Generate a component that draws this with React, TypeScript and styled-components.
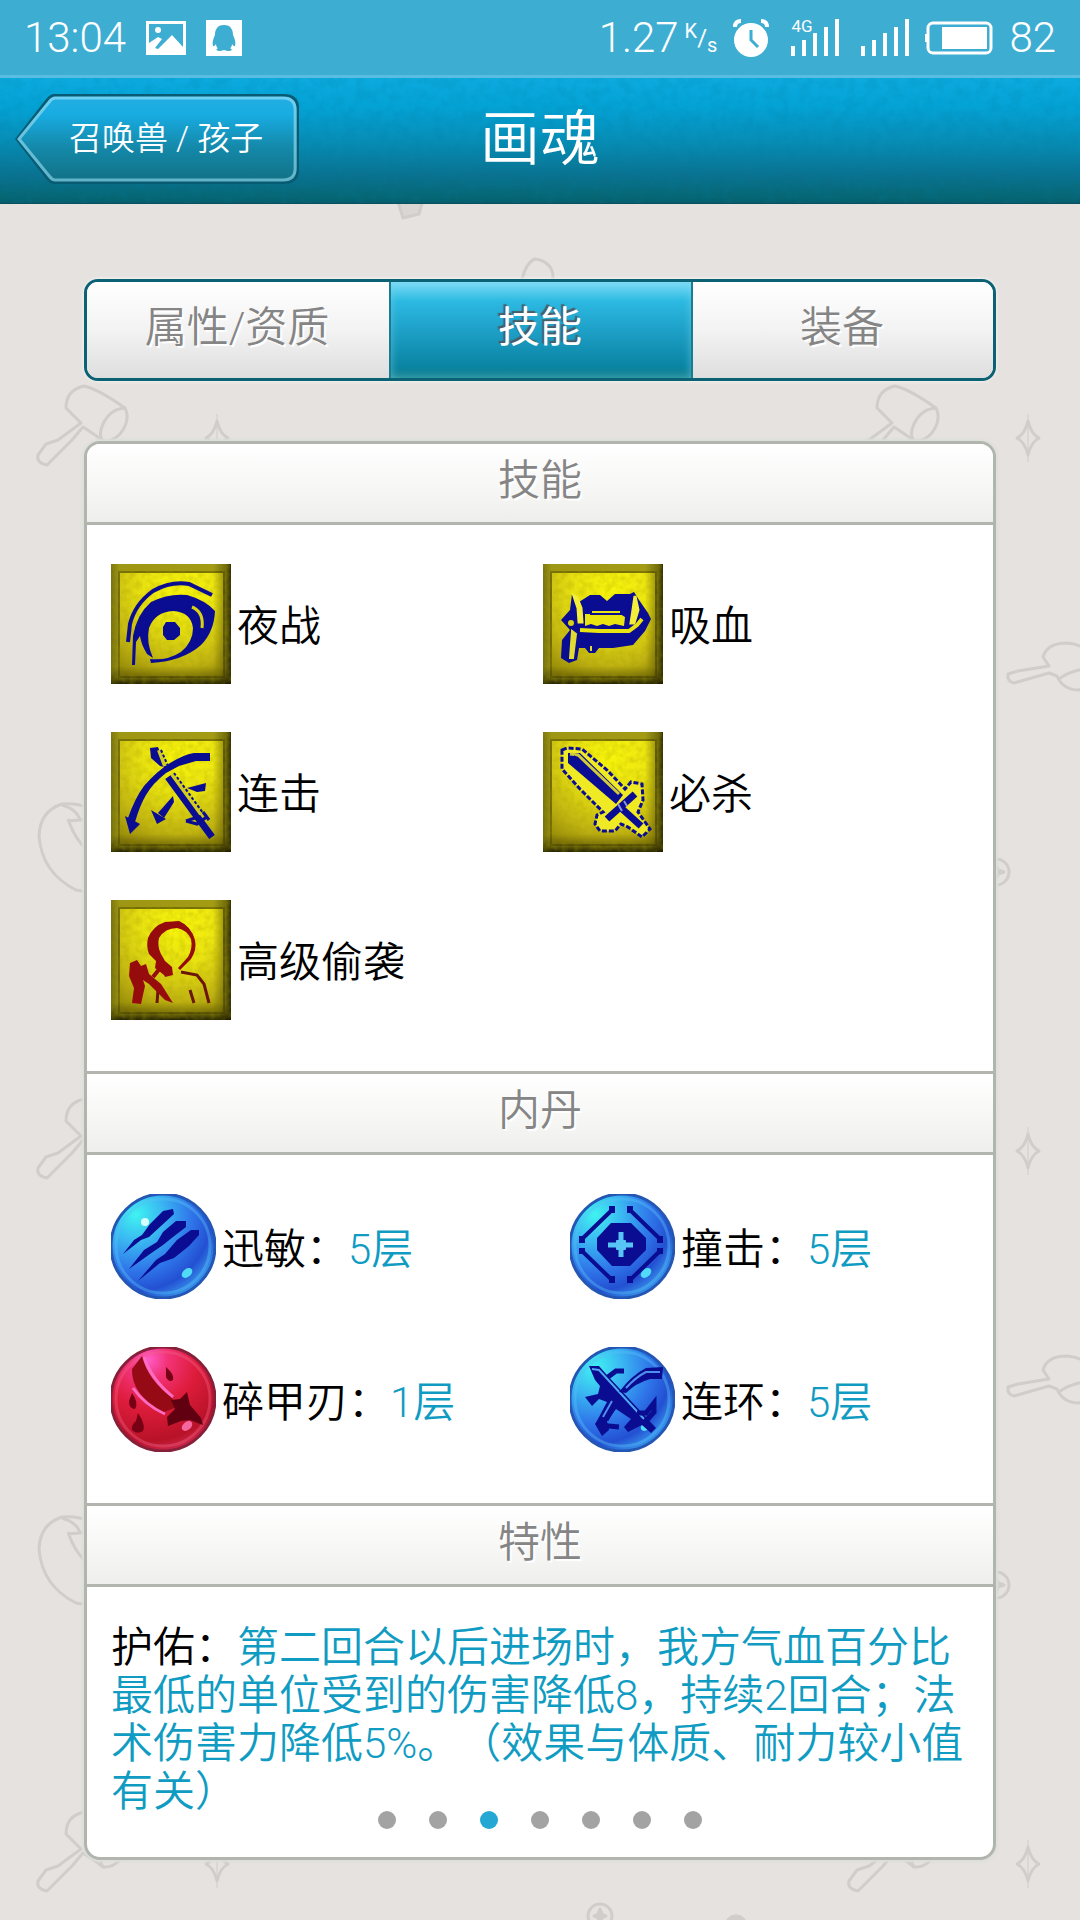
import React, { useState } from "react";
import styled, { createGlobalStyle, css } from "styled-components";

const INK = "#0a0c92";
const LINE = "#b1b5ae";

const GlobalStyle = createGlobalStyle`
  *, *::before, *::after { box-sizing: border-box; }
  body {
    margin: 0;
    background: #e5e2df;
    font-family: Roboto, "Noto Sans CJK SC", sans-serif;
    font-weight: 350;
    text-spacing-trim: space-all;
  }
  button { font: inherit; cursor: pointer; }
  h1, h2, p, ul { margin: 0; padding: 0; font-weight: inherit; }
  ul { list-style: none; }
`;

const Page = styled.div`
  position: relative;
  min-height: 100vh;
`;

const Backdrop = styled.svg`
  position: absolute;
  inset: 0;
  width: 100%;
  height: 100%;
`;

const StatusBar = styled.div`
  position: relative;
  display: flex;
  align-items: center;
  justify-content: space-between;
  height: 78px;
  padding: 0 24px;
  border-bottom: 3px solid #58bde0;
  background: #3eadd2;
  color: #fff;
  font-size: 42px;
  font-weight: 300;
  line-height: 75px;
`;

const StatusGroup = styled.div`
  display: flex;
  align-items: center;
  gap: ${(p: { $gap: number }) => p.$gap}px;
`;

const Speed = styled.span`
  display: flex;
  align-items: center;
  gap: 6px;
`;

const Unit = styled.span`
  display: flex;
  height: 34px;
  font-size: 20px;
  font-weight: 400;
  line-height: 20px;
`;

const UnitPart = styled.span<{ $low?: boolean; $big?: boolean }>`
  align-self: ${(p) => (p.$big ? "center" : p.$low ? "flex-end" : "flex-start")};
  font-size: ${(p) => (p.$big ? 24 : 20)}px;
`;

const TopBar = styled.header`
  position: relative;
  display: grid;
  grid-template-columns: 1fr auto 1fr;
  align-items: center;
  height: 126px;
  padding: 0 15px;
  border-bottom: 1px solid #0a4f60;
  background: linear-gradient(#0caade 0%, #04a3d6 22%, #078cb4 52%, #0a7290 78%, #066672 96%, #055c6c 100%);
`;

const Grain = styled.svg`
  position: absolute;
  inset: 0;
  width: 100%;
  height: 100%;
  opacity: 0.14;
`;

const BackButton = styled.button`
  position: relative;
  justify-self: start;
  height: 90px;
  margin-bottom: 3px;
  padding: 0 36px 0 54px;
  border: 0;
  background: none;
  color: #fff;
  font-size: 33px;
  line-height: 40px;
`;

const BackShape = styled.svg`
  position: absolute;
  inset: 0;
  width: 100%;
  height: 100%;
`;

const BackLabel = styled.span`
  position: relative;
`;

const Title = styled.h1`
  position: relative;
  padding-bottom: 2px;
  color: #fff;
  font-size: 60px;
  line-height: 70px;
`;

const Main = styled.main`
  position: relative;
  padding: 75px 84px 60px;
`;

const Tabs = styled.div`
  display: grid;
  grid-template-columns: repeat(3, 1fr);
  overflow: hidden;
  border: 3px solid #0a6274;
  border-radius: 14px;
  box-shadow: 0 0 3px 1px #f2f1ef;
`;

const Tab = styled.button<{ $active: boolean }>`
  height: 96px;
  padding: 0 2px 4px 0;
  border: 0;
  background: linear-gradient(#ffffff 0%, #f3f3f3 50%, #dedede 100%);
  color: #858585;
  font-size: 42px;
  line-height: 50px;
  text-shadow: 2px 2px 1px #fff;

  & + & {
    border-left: 2px solid #1b7c90;
  }

  ${(p) =>
    p.$active &&
    css`
      background: linear-gradient(#7fdcf8 0%, #5cceee 8%, #2cb9e2 20%, #1d9fc6 52%, #0a84a3 88%, #15808c 100%);
      box-shadow: inset 0 0 8px rgba(120, 215, 235, 0.6);
      color: #fff;
      font-weight: 400;
      text-shadow: -2px -2px 1px #4a5c66;
    `}
`;

const Panel = styled.section`
  position: relative;
  margin-top: 60px;
  overflow: hidden;
  border: 3px solid ${LINE};
  border-radius: 16px;
  background: #fff;
  box-shadow: 0 0 2px 2px #dcdfda;
`;

const SectionTitle = styled.h2<{ $first?: boolean }>`
  height: ${(p) => (p.$first ? 81 : 84)}px;
  padding-top: 12px;
  border-top: ${(p) => (p.$first ? 0 : 3)}px solid ${LINE};
  border-bottom: 3px solid ${LINE};
  background: linear-gradient(#ffffff, #f6f6f5 60%, #eeefec);
  color: #858585;
  font-size: 42px;
  line-height: 50px;
  text-align: center;
  text-shadow: 2px 2px 1px #fff;
`;

const SkillList = styled.ul`
  display: grid;
  grid-template-columns: 1fr 1fr;
  row-gap: 48px;
  padding: 39px 18px 51px 24px;
`;

const PearlList = styled.ul`
  display: grid;
  grid-template-columns: 17fr 15fr;
  row-gap: 48px;
  padding: 39px 18px 51px 24px;
`;

const Entry = styled.li`
  display: flex;
  align-items: center;
  gap: 6px;
  color: #000;
  font-size: 42px;
  line-height: 50px;
`;

const EntryText = styled.span`
  padding-top: 6px;
`;

const Blue = styled.span`
  color: #109cc2;
`;

const Trait = styled.p`
  padding: 37px 18px 41px 24px;
  color: #109cc2;
  font-size: 42px;
  line-height: 48px;
`;

const TraitName = styled.span`
  color: #000;
`;

const Dots = styled.div`
  position: absolute;
  right: 0;
  bottom: 28px;
  left: 0;
  display: flex;
  justify-content: center;
  gap: 33px;
`;

const Dot = styled.button<{ $active: boolean }>`
  width: 18px;
  height: 18px;
  padding: 0;
  border: 0;
  border-radius: 50%;
  background: ${(p) => (p.$active ? "#23a7d3" : "#a3a3a3")};
`;

/* ---------- backdrop doodles ---------- */

const Doodles = () => (
  <Backdrop aria-hidden="true">
    <defs>
      <pattern id="doodles" width="811" height="713" patternUnits="userSpaceOnUse">
        <g fill="none" stroke="#d0cdca" strokeWidth="3" strokeLinejoin="round">
          <path d="M81 423 L66 408 Q66 390 84 386 Q98 389 125 408 Q131 420 120 434 Q112 442 103 441 Q97 436 83 427 L72 440 L47 465 Q36 463 38 455 L46 444 L58 440 Z" />
          <path d="M125 408 Q110 409 103 424 Q98 435 103 441" />
          <path d="M217 421 Q220 434 228 438 Q220 442 217 455 Q214 442 206 438 Q214 434 217 421Z" />
          <path d="M217 414V462" strokeWidth="1" />
          <path d="M92 96 Q78 90 62 91 Q40 98 39 123 Q42 160 76 177 Q90 180 110 176" />
          <path d="M68 108 L90 106 M68 106 Q76 130 92 140 M80 106 Q76 96 62 92" />
          <path d="M238 666 L232 657 Q236 643 256 643 Q272 644 278 654 L288 668 Q288 684 268 690 Q252 690 246 676 L238 673 L203 683 Q196 682 197 674 L207 671 Z" />
          <path d="M288 668 Q262 668 248 679" />
          <circle cx="185" cy="159" r="13" />
          <path d="M185 151 L187 157 L193 159 L187 161 L185 167 L183 161 L177 159 L183 157 Z" fill="#d0cdca" />
          <circle cx="600" cy="490" r="12" />
          <path d="M600 483 L602 488 L606 490 L602 492 L600 497 L598 492 L594 490 L598 488 Z" fill="#d0cdca" />
          <circle cx="736" cy="500" r="10" fill="#d0cdca" />
          <path d="M395 192 L403 218 L419 214 L425 192" fill="#d9d6d3" />
          <path d="M521 284 Q525 263 535 259 Q550 261 553 274 L552 286" />
        </g>
      </pattern>
    </defs>
    <rect width="100%" height="100%" fill="url(#doodles)" />
  </Backdrop>
);

/* ---------- status bar icons ---------- */

const PictureIcon = () => (
  <svg width="40" height="34" viewBox="0 0 40 34" aria-hidden="true">
    <path fill="#fff" fillRule="evenodd" d="M0 0H40V34H0Z M3 3V22L12 16L16 18L9 27L12 28L26 14L37 26V3Z" />
    <circle cx="12" cy="9" r="3" fill="#fff" />
  </svg>
);

const PenguinIcon = () => (
  <svg width="36" height="36" viewBox="0 0 36 36" aria-hidden="true">
    <path fill="#fff" d="M0 0H36V36H0Z" />
    <path
      fill="#3eadd2"
      d="M18 5C11 5 9 10 9 15C7 19 6 23 7 26C8 27 9 25 10 24C10 26 11 28 12 28C9 30 11 31 14 31C16 31 17 30 18 30C19 30 20 31 22 31C26 31 27 30 24 28C25 28 26 26 26 24C27 25 28 27 29 26C30 23 29 19 27 15C27 10 25 5 18 5Z"
    />
  </svg>
);

const AlarmIcon = () => (
  <svg width="36" height="38" viewBox="0 0 36 38" aria-hidden="true">
    <circle cx="18" cy="21" r="17" fill="#fff" />
    <path d="M2 8Q2 2 8 2 M28 2Q34 2 34 8" fill="none" stroke="#fff" strokeWidth="4" />
    <path d="M18 11V21L25 28" fill="none" stroke="#3eadd2" strokeWidth="3" />
  </svg>
);

const SignalBox = styled.span`
  position: relative;
  display: flex;
  align-items: flex-end;
  gap: 7px;
  height: 37px;
  margin-left: 6px;
`;

const SignalBar = styled.i<{ $height: number }>`
  width: 4px;
  height: ${(p) => p.$height}px;
  background: #fff;
`;

const NetworkTag = styled.span`
  position: absolute;
  top: 0;
  left: 0;
  font-size: 17px;
  font-weight: 400;
  line-height: 14px;
`;

const Signal = ({ tag }: { tag?: string }) => (
  <SignalBox>
    {[10, 16, 23, 29, 37].map((h) => (
      <SignalBar key={h} $height={h} />
    ))}
    {tag && <NetworkTag>{tag}</NetworkTag>}
  </SignalBox>
);

const BatteryIcon = () => (
  <svg width="68" height="34" viewBox="0 0 68 34" aria-hidden="true">
    <rect x="3" y="2" width="63" height="30" rx="5" fill="none" stroke="#fff" strokeWidth="3" />
    <path d="M0 13H3V21H0Z M17 6H62V28H17Z" fill="#fff" />
  </svg>
);

/* ---------- skill plates ---------- */

const Plate = ({ children }: { children: React.ReactNode }) => (
  <svg width="120" height="120" viewBox="0 0 120 120" aria-hidden="true">
    <rect width="120" height="120" fill="#a49c16" />
    <rect x="8" y="8" width="105" height="105" fill="url(#plateFace)" stroke="#7a7208" strokeWidth="2" />
    <rect width="120" height="120" fill="url(#plateShadeX)" />
    <rect width="120" height="120" fill="url(#plateShadeY)" />
    <rect width="120" height="120" filter="url(#plateGrain)" opacity="0.28" />
    {children}
  </svg>
);

const HiddenSvg = styled.svg`
  position: absolute;
`;

const SharedDefs = () => (
  <HiddenSvg width="0" height="0" aria-hidden="true">
    <defs>
      <linearGradient id="plateShadeX" x1="0" y1="0" x2="1" y2="0">
        <stop offset="0" stopColor="#2a2600" stopOpacity="0.35" />
        <stop offset="0.07" stopColor="#2a2600" stopOpacity="0.05" />
        <stop offset="0.85" stopColor="#2a2600" stopOpacity="0" />
        <stop offset="0.95" stopColor="#2a2600" stopOpacity="0.4" />
        <stop offset="1" stopColor="#151300" stopOpacity="0.85" />
      </linearGradient>
      <linearGradient id="plateShadeY" x1="0" y1="0" x2="0" y2="1">
        <stop offset="0" stopColor="#2a2600" stopOpacity="0" />
        <stop offset="0.85" stopColor="#2a2600" stopOpacity="0.06" />
        <stop offset="0.94" stopColor="#2a2600" stopOpacity="0.4" />
        <stop offset="1" stopColor="#151300" stopOpacity="0.9" />
      </linearGradient>
      <radialGradient id="plateFace" cx="0.55" cy="0.2" r="0.9">
        <stop offset="0" stopColor="#fffc0a" />
        <stop offset="0.4" stopColor="#f1ea12" />
        <stop offset="0.75" stopColor="#cfc114" />
        <stop offset="1" stopColor="#a3960c" />
      </radialGradient>
      <filter id="plateGrain">
        <feTurbulence type="fractalNoise" baseFrequency="0.16" numOctaves="2" seed="4" />
        <feColorMatrix values="0 0 0 0 0.35  0 0 0 0 0.32  0 0 0 0 0  2 0 0 0 -0.7" />
      </filter>
      <radialGradient id="pearlBlue" cx="0.24" cy="0.2" r="0.86">
        <stop offset="0" stopColor="#3ff3f0" />
        <stop offset="0.3" stopColor="#3ab8f2" />
        <stop offset="0.62" stopColor="#2f76ea" />
        <stop offset="0.85" stopColor="#2350d2" />
        <stop offset="1" stopColor="#348ae8" />
      </radialGradient>
      <radialGradient id="pearlRed" cx="0.36" cy="0.12" r="0.92">
        <stop offset="0" stopColor="#ff5cc8" />
        <stop offset="0.2" stopColor="#f23478" />
        <stop offset="0.5" stopColor="#de1c3c" />
        <stop offset="0.85" stopColor="#b81228" />
        <stop offset="1" stopColor="#cf2a4c" />
      </radialGradient>
    </defs>
  </HiddenSvg>
);

const EyeIcon = () => (
  <Plate>
    <path d="M17 78L19 60Q24 40 42 27Q60 17 78 20L101 31" fill="none" stroke={INK} strokeWidth="4" />
    <path
      fillRule="evenodd"
      fill={INK}
      d="M21 101L22 72Q26 50 40 38Q58 29 76 31Q94 36 104 47Q103 68 90 81Q72 97 40 99L39 95Q56 97 70 88Q82 78 82 64Q80 48 62 47Q44 48 38 64Q35 78 42 94L36 90Q30 80 29 72L25 78L24 101Z"
    />
    <path d="M81 43Q93 48 91 64" fill="none" stroke="#d8d214" strokeWidth="3" />
    <path d="M55 58H64L69 64V71L63 76H56L52 71V63Z" fill={INK} />
  </Plate>
);

const FangIcon = () => (
  <Plate>
    <path
      fill={INK}
      d="M29 30L36 38L47 31L57 31L64 37L72 30H87L91 28L96 36L105 49L108 55L102 67L90 81L70 84H56L52 89H46L42 84H36L34 96L26 99L18 94L19 76L27 66L18 56L27 46Z"
    />
    <path d="M42 50L49 50V47H77V50L82 53L81 62L72 60L66 62L60 60L54 62L48 60L42 62Z" fill="#e9e312" />
    <path d="M47 50H79" stroke={INK} strokeWidth="2" />
    <path d="M37 66L56 67H86L94 61L99 55" fill="none" stroke="#e9e312" strokeWidth="4" />
    <path d="M31 32L35 44L36 58L39 58L38 44L34 34Z M92 32L90 46L88 59L91 59L95 46Z" fill="#f4ee3a" stroke="#f4ee3a" strokeWidth="3" />
    <path d="M29 67L27 94H30L33 70Z M48 82V87" fill="#e3dc30" stroke="#e3dc30" strokeWidth="2" />
    <circle cx="28" cy="59" r="3" fill="#d9d214" />
  </Plate>
);

const DoubleHitIcon = () => (
  <Plate>
    <path d="M99 21V29H85L68 34L55 41Q42 51 35 63Q29 73 24 90L17 86Q24 66 33 54Q46 39 59 31Q74 22 83 21Z" fill={INK} />
    <path d="M14 84L29 92L19 102Z M40 78L55 87L46 92Z M39 16L47 15L52 28L57 36L49 34L40 26Z" fill={INK} />
    <path d="M57 45L101 105" stroke={INK} strokeWidth="7" />
    <path d="M48 18L54 34 M61 42L90 82" stroke="#d3cc20" strokeWidth="4" />
    <path d="M50 18L57 34 M63 41L92 81" stroke={INK} strokeWidth="2" strokeDasharray="3 2" />
    <path d="M75 89L86 92L97 84M75 89L84 86M92 80L98 88" fill="none" stroke={INK} strokeWidth="3" />
    <path d="M76 56L95 51L94 59L86 60Z M62 64L47 81L53 86L63 70Z" fill={INK} />
  </Plate>
);

const SwordIcon = () => (
  <Plate>
    <path
      d="M19 18L24 16L39 17L64 38L82 57L88 50L99 52L100 68L95 80L107 97L99 105L85 95L78 92L72 99H57L52 92L54 83L60 80L37 57L19 37Z"
      fill="#f0ea25"
      stroke={INK}
      strokeWidth="3"
      strokeDasharray="5 2"
    />
    <path d="M25 21H37L80 63L73 72L25 31Z" fill={INK} />
    <path d="M27 22L35 23L76 62" fill="none" stroke="#cfca3a" strokeWidth="3" />
    <path d="M31 24L76 66" stroke={INK} strokeWidth="2" strokeDasharray="2 2" />
    <path d="M64 87L92 62" stroke={INK} strokeWidth="7" />
    <path d="M77 75L98 94" stroke={INK} strokeWidth="7" />
    <path d="M75 72L79 79M81 69L84 74" stroke="#8b93d4" strokeWidth="2" />
  </Plate>
);

const SneakIcon = () => (
  <Plate>
    <path
      fill="#960c0c"
      d="M53 75L44 68L45 61L38 54Q35 46 37 38Q42 26 54 22L68 21Q80 26 84 40Q86 50 80 59L69 70L67 68L77 57Q82 48 80 39Q76 30 66 28Q54 28 48 38Q46 46 50 54L54 61L61 67L62 75L54 77Z"
    />
    <path d="M70 72L86 75L93 84L98 103 M79 90L83 103 M47 90L46 103" fill="none" stroke="#6b1608" strokeWidth="3" />
    <path d="M19 63L26 60L30 66L35 64L38 74L50 84L62 103L54 100L38 84L32 80L34 86L30 104L21 103L23 88L18 76Z" fill="#960c0c" />
    <path d="M42 77L50 67L58 72" fill="none" stroke="#960c0c" strokeWidth="4" />
  </Plate>
);

/* ---------- pearls ---------- */

const Pearl = ({ tone, children }: { tone: "blue" | "red"; children: React.ReactNode }) => (
  <svg width="105" height="105" viewBox="0 0 105 105" aria-hidden="true">
    <circle
      cx="52"
      cy="52"
      r="52"
      fill={tone === "blue" ? "url(#pearlBlue)" : "url(#pearlRed)"}
      stroke={tone === "blue" ? "#2456b4" : "#86203a"}
      strokeWidth="3"
    />
    <circle cx="52" cy="52" r="47" fill="none" stroke={tone === "blue" ? "#58c4f4" : "#f06088"} strokeWidth="3" opacity="0.4" />
    <ellipse cx="76" cy="79" rx="6" ry="4" fill={tone === "blue" ? "#50dcf8" : "#f468a0"} transform="rotate(-40 76 79)" />
    {children}
  </svg>
);

const ClawPearl = () => (
  <Pearl tone="blue">
    <ellipse cx="34" cy="28" rx="4" ry="4" fill="#d8ffff" />
    <g fill={INK}>
      <path d="M12 60L23 46L31 41L39 30L52 17L62 15L63 20L50 32L38 43L30 46Z" />
      <path d="M18 75L33 56L46 48L52 38L65 27L75 27V33L62 43L52 51L39 60Z" />
      <path d="M27 87L45 66L54 60L66 46L80 36L88 36V41L78 52L63 64L49 69Z" />
    </g>
  </Pearl>
);

const BladePearl = () => (
  <Pearl tone="red">
    <path d="M33 10Q40 32 62 50M22 41Q34 58 54 67" fill="none" stroke="#ff6cc4" strokeWidth="3" />
    <path d="M31 9Q37 33 61 51L66 60L53 65Q20 48 21 22Z" fill="#960a16" />
    <path d="M76 45L79 58L90 71L92 78L79 73L70 74L57 79L56 70L64 62L60 53L69 52Z" fill="#600010" />
    <path d="M55 20Q64 28 62 33Q58 36 55 30Z M21 46Q28 56 24 62Q18 62 18 54Z M27 66Q35 78 32 84Q26 88 21 83Q20 78 25 74Z" fill="#780014" />
  </Pearl>
);

const RamPearl = () => (
  <Pearl tone="blue">
    <path d="M41 29H61L76 44V56L60 72H42L27 56V44Z" fill={INK} />
    <path d="M51 38V63M38 51H63" stroke="#58c4f6" strokeWidth="5" />
    <path d="M46 51H56M51 46V56" stroke="#58c4f6" strokeWidth="9" />
    <path d="M42 16L12 45M60 16L90 45M12 57L42 86M90 57L60 86" stroke={INK} strokeWidth="4" />
    <path
      d="M39 12H45V19H39Z M57 12H63V19H57Z M9 42H15V49H9Z M87 42H93V49H87Z M9 54H15V60H9Z M87 54H93V60H87Z M39 82H45V89H39Z M57 82H63V89H57Z"
      fill={INK}
    />
  </Pearl>
);

const ChainPearl = () => (
  <Pearl tone="blue">
    <path d="M19 19H29L36 27L86 81L81 86L72 78L58 85L54 80L61 72L46 62L37 74L39 83L32 89L25 77L28 72L37 55L29 52L22 59L15 50L28 47L30 39L25 33Z" fill={INK} />
    <path d="M22 22L29 23L74 72" fill="none" stroke="#4fa8f0" strokeWidth="2" />
    <path d="M93 20L76 21Q62 28 49 45L56 46Q66 36 80 32H92Z" fill={INK} />
    <path d="M90 25H76Q66 30 56 41" fill="none" stroke="#4f90ec" strokeWidth="2" />
    <path d="M38 30L46 24H54M67 66L76 66L84 56L84 65L76 74 M46 56L36 73M28 78L49 80" fill="none" stroke={INK} strokeWidth="5" />
    <path d="M42 54L33 70" stroke="#4f90ec" strokeWidth="2" />
  </Pearl>
);

const tabs = ["属性/资质", "技能", "装备"];

const skills = [
  { name: "夜战", Icon: EyeIcon },
  { name: "吸血", Icon: FangIcon },
  { name: "连击", Icon: DoubleHitIcon },
  { name: "必杀", Icon: SwordIcon },
  { name: "高级偷袭", Icon: SneakIcon },
];

const pearls = [
  { name: "迅敏", level: 5, Icon: ClawPearl },
  { name: "撞击", level: 5, Icon: RamPearl },
  { name: "碎甲刃", level: 1, Icon: BladePearl },
  { name: "连环", level: 5, Icon: ChainPearl },
];

export default function App() {
  const [tab, setTab] = useState(1);
  const [page, setPage] = useState(2);

  return (
    <Page>
      <GlobalStyle />
      <SharedDefs />
      <Doodles />
      <StatusBar>
        <StatusGroup $gap={20}>
          <span>13:04</span>
          <PictureIcon />
          <PenguinIcon />
        </StatusGroup>
        <StatusGroup $gap={16}>
          <Speed>
            1.27
            <Unit>
              <UnitPart>K</UnitPart>
              <UnitPart $big>/</UnitPart>
              <UnitPart $low>s</UnitPart>
            </Unit>
          </Speed>
          <AlarmIcon />
          <Signal tag="4G" />
          <Signal />
          <BatteryIcon />
          <span>82</span>
        </StatusGroup>
      </StatusBar>
      <TopBar>
        <Grain aria-hidden="true">
          <filter id="barGrain">
            <feTurbulence type="fractalNoise" baseFrequency="0.09" numOctaves="3" seed="8" />
            <feColorMatrix values="0 0 0 0 0  0 0 0 0 0.2  0 0 0 0 0.35  3 0 0 0 -1.2" />
          </filter>
          <rect width="100%" height="100%" filter="url(#barGrain)" />
        </Grain>
        <BackButton type="button">
          <BackShape viewBox="0 0 283 90" preserveAspectRatio="none" aria-hidden="true">
            <defs>
              <linearGradient id="backFill" x1="0" y1="0" x2="0" y2="1">
                <stop offset="0" stopColor="#22aee2" />
                <stop offset="0.2" stopColor="#18ace2" />
                <stop offset="0.6" stopColor="#1489aa" />
                <stop offset="1" stopColor="#127286" />
              </linearGradient>
              <linearGradient id="backRim" x1="0" y1="0" x2="0" y2="1">
                <stop offset="0" stopColor="#6ed0f2" />
                <stop offset="1" stopColor="#62b4c8" />
              </linearGradient>
            </defs>
            <path d="M39 0H268Q283 0 283 15V75Q283 90 268 90H39Q35 90 31 85L0 45L31 5Q35 0 39 0Z" fill="#075c74" />
            <path d="M40 4H267Q279 4 279 16V74Q279 86 267 86H40Q37 86 34 82L4 45L34 8Q37 4 40 4Z" fill="url(#backFill)" stroke="url(#backRim)" strokeWidth="3" />
          </BackShape>
          <BackLabel>召唤兽 / 孩子</BackLabel>
        </BackButton>
        <Title>画魂</Title>
      </TopBar>
      <Main>
        <Tabs role="tablist">
          {tabs.map((name, i) => (
            <Tab key={name} type="button" role="tab" aria-selected={i === tab} $active={i === tab} onClick={() => setTab(i)}>
              {name}
            </Tab>
          ))}
        </Tabs>
        <Panel>
          <SectionTitle $first>技能</SectionTitle>
          <SkillList>
            {skills.map(({ name, Icon }) => (
              <Entry key={name}>
                <Icon />
                <EntryText>{name}</EntryText>
              </Entry>
            ))}
          </SkillList>
          <SectionTitle>内丹</SectionTitle>
          <PearlList>
            {pearls.map(({ name, level, Icon }) => (
              <Entry key={name}>
                <Icon />
                <EntryText>
                  {name}：<Blue>{level}层</Blue>
                </EntryText>
              </Entry>
            ))}
          </PearlList>
          <SectionTitle>特性</SectionTitle>
          <Trait>
            <TraitName>护佑：</TraitName>
            第二回合以后进场时，我方气血百分比最低的单位受到的伤害降低8，持续2回合；法术伤害力降低5%。（效果与体质、耐力较小值有关）
          </Trait>
          <Dots>
            {[0, 1, 2, 3, 4, 5, 6].map((i) => (
              <Dot key={i} type="button" aria-label={`第${i + 1}页`} $active={i === page} onClick={() => setPage(i)} />
            ))}
          </Dots>
        </Panel>
      </Main>
    </Page>
  );
}
